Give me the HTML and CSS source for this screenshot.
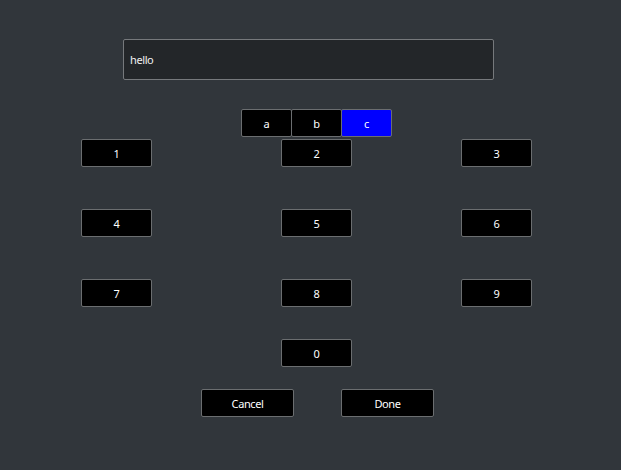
FILE: index.html
```html
<!DOCTYPE html>
<html>
<head>
<meta charset="utf-8">
<link rel="stylesheet" href="styles.css">
</head>
<body>
<div class="page">
  <div class="input">hello</div>
  <div class="seg">
    <div class="btn segbtn">a</div>
    <div class="btn segbtn">b</div>
    <div class="btn segbtn active">c</div>
  </div>
  <div class="keypad">
    <div class="btn key">1</div>
    <div class="btn key">2</div>
    <div class="btn key">3</div>
    <div class="btn key">4</div>
    <div class="btn key">5</div>
    <div class="btn key">6</div>
    <div class="btn key">7</div>
    <div class="btn key">8</div>
    <div class="btn key">9</div>
    <div class="btn key zero">0</div>
  </div>
  <div class="actions">
    <div class="btn action">Cancel</div>
    <div class="btn action">Done</div>
  </div>
</div>
</body>
</html>
```
FILE: styles.css
```css
html, body {
  margin: 0;
  padding: 0;
  background: #31363b;
  font-family: "Noto Sans", "Liberation Sans", sans-serif;
  font-size: 11px;
  letter-spacing: -0.4px;
  color: #ffffff;
}
.page {
  width: 621px;
  height: 470px;
  padding-top: 39px;
  box-sizing: border-box;
  overflow: hidden;
}
.input {
  margin-left: 123px;
  width: 371px;
  height: 41px;
  box-sizing: border-box;
  background: #232629;
  border: 1px solid #76797c;
  border-radius: 2px;
  padding-left: 6px;
  display: flex;
  align-items: center;
  color: #eff0f1;
}
.btn {
  box-sizing: border-box;
  background: #000000;
  border: 1px solid #6b6e70;
  border-radius: 2px;
  display: flex;
  align-items: center;
  justify-content: center;
  padding-top: 1px;
  color: #ffffff;
  height: 28px;
}
.seg {
  display: flex;
  margin-left: 241px;
  margin-top: 29px;
}
.segbtn {
  width: 51px;
}
.segbtn + .segbtn {
  margin-left: -1px;
}
.segbtn.active {
  background: #0000ff;
}
.keypad {
  display: grid;
  margin-left: 81px;
  margin-top: 2px;
  grid-template-columns: 200px 180px 71px;
  grid-template-rows: 70px 70px 60px 28px;
  align-items: start;
}
.key {
  width: 71px;
}
.zero {
  grid-column: 2;
}
.actions {
  display: flex;
  gap: 47px;
  margin-left: 201px;
  margin-top: 22px;
}
.action {
  width: 93px;
}
```
